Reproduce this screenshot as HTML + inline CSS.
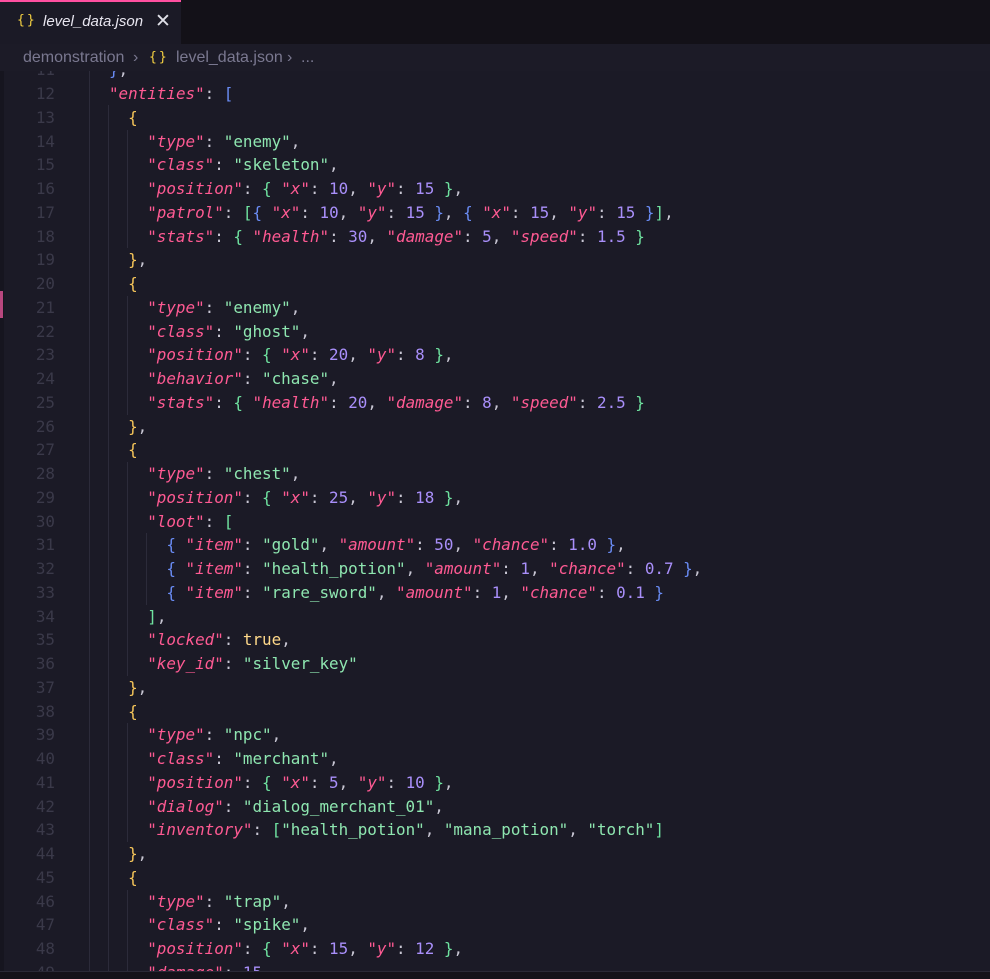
<!DOCTYPE html>
<html><head><meta charset="utf-8"><style>
*{margin:0;padding:0;box-sizing:border-box}
body{width:990px;height:979px;overflow:hidden;background:#1b1a26;position:relative;font-family:"DejaVu Sans Mono","Liberation Mono",monospace}
#tabs{position:absolute;left:0;top:0;width:990px;height:44px;background:#131118}
#tab{position:absolute;left:0;top:0;width:181px;height:44px;background:#1b1a26;border-top:2px solid #ff4fa0;font-family:"Liberation Sans",sans-serif;font-size:15px;color:#e8e6f0;font-style:italic}
#tab .br{position:absolute;left:17px;top:11px;color:#f5d142;font-style:normal;font-family:"DejaVu Sans Mono",monospace;font-size:13px;letter-spacing:2px}
#tab .nm{position:absolute;left:43px;top:11px}
#tab .x{position:absolute;left:155px;top:8px;font-style:normal;font-size:19px;color:#e0e0e8}
#crumb{position:absolute;left:0;top:44px;width:990px;height:27px;background:#1c1b27;font-family:"Liberation Sans",sans-serif;font-size:16px;color:#7a7890;white-space:nowrap}
#crumb span{position:absolute;top:5px}
#ed{position:absolute;left:0;top:71px;width:990px;height:900px;overflow:hidden}
.strip{position:absolute;left:0;top:0;width:4px;height:900px;background:#16151f}
.mark{position:absolute;left:0;top:220px;width:3px;height:27px;background:#b8477e}
.g{position:absolute;width:1px;background:#2c2b3a}
.ln{position:absolute;left:0;width:55px;text-align:right;color:#3a3949;font-size:15.9px;line-height:23.75px;height:23.75px}
.l{position:absolute;left:70.7px;white-space:pre;font-size:15.9px;line-height:23.75px;height:23.75px;color:#c9c7d4}
.k{color:#ff5a93;font-style:italic}
.s{color:#8ee6b0}
.n{color:#a98ffa}
.t{color:#ffd98a}
.b1{color:#6a8cf5}
.b2{color:#f7c65a}
.b3{color:#6fe3a0}
#bot{position:absolute;left:0;top:971px;width:990px;height:8px;background:#141219;border-top:1px solid #2a2936}
</style></head><body>
<div id="tabs"><div id="tab"><span class="br">{}</span><span class="nm">level_data.json</span><span class="x">✕</span></div></div>
<div id="crumb"><span style="left:23px">demonstration</span><span style="left:133px">›</span><span style="left:149px;color:#f5d142;font-family:'DejaVu Sans Mono',monospace;font-size:13px;letter-spacing:2px;top:6px">{}</span><span style="left:176px">level_data.json</span><span style="left:287px">›</span><span style="left:301px">...</span></div>
<div id="ed">
<div class="strip"></div><div class="mark"></div>
<div class="g" style="left:89px;top:0;height:900px"></div>
<div class="g" style="left:108px;top:34px;height:866px"></div>
<div id="code"></div>
</div>
<div id="bot"></div>
<script>
const L=[
[11,'    <span class="b1">}</span>,'],
[12,'    <span class="k">"entities"</span>: <span class="b1">[</span>'],
[13,'      <span class="b2">{</span>'],
[14,'        <span class="k">"type"</span>: <span class="s">"enemy"</span>,'],
[15,'        <span class="k">"class"</span>: <span class="s">"skeleton"</span>,'],
[16,'        <span class="k">"position"</span>: <span class="b3">{</span> <span class="k">"x"</span>: <span class="n">10</span>, <span class="k">"y"</span>: <span class="n">15</span> <span class="b3">}</span>,'],
[17,'        <span class="k">"patrol"</span>: <span class="b3">[</span><span class="b1">{</span> <span class="k">"x"</span>: <span class="n">10</span>, <span class="k">"y"</span>: <span class="n">15</span> <span class="b1">}</span>, <span class="b1">{</span> <span class="k">"x"</span>: <span class="n">15</span>, <span class="k">"y"</span>: <span class="n">15</span> <span class="b1">}</span><span class="b3">]</span>,'],
[18,'        <span class="k">"stats"</span>: <span class="b3">{</span> <span class="k">"health"</span>: <span class="n">30</span>, <span class="k">"damage"</span>: <span class="n">5</span>, <span class="k">"speed"</span>: <span class="n">1.5</span> <span class="b3">}</span>'],
[19,'      <span class="b2">}</span>,'],
[20,'      <span class="b2">{</span>'],
[21,'        <span class="k">"type"</span>: <span class="s">"enemy"</span>,'],
[22,'        <span class="k">"class"</span>: <span class="s">"ghost"</span>,'],
[23,'        <span class="k">"position"</span>: <span class="b3">{</span> <span class="k">"x"</span>: <span class="n">20</span>, <span class="k">"y"</span>: <span class="n">8</span> <span class="b3">}</span>,'],
[24,'        <span class="k">"behavior"</span>: <span class="s">"chase"</span>,'],
[25,'        <span class="k">"stats"</span>: <span class="b3">{</span> <span class="k">"health"</span>: <span class="n">20</span>, <span class="k">"damage"</span>: <span class="n">8</span>, <span class="k">"speed"</span>: <span class="n">2.5</span> <span class="b3">}</span>'],
[26,'      <span class="b2">}</span>,'],
[27,'      <span class="b2">{</span>'],
[28,'        <span class="k">"type"</span>: <span class="s">"chest"</span>,'],
[29,'        <span class="k">"position"</span>: <span class="b3">{</span> <span class="k">"x"</span>: <span class="n">25</span>, <span class="k">"y"</span>: <span class="n">18</span> <span class="b3">}</span>,'],
[30,'        <span class="k">"loot"</span>: <span class="b3">[</span>'],
[31,'          <span class="b1">{</span> <span class="k">"item"</span>: <span class="s">"gold"</span>, <span class="k">"amount"</span>: <span class="n">50</span>, <span class="k">"chance"</span>: <span class="n">1.0</span> <span class="b1">}</span>,'],
[32,'          <span class="b1">{</span> <span class="k">"item"</span>: <span class="s">"health_potion"</span>, <span class="k">"amount"</span>: <span class="n">1</span>, <span class="k">"chance"</span>: <span class="n">0.7</span> <span class="b1">}</span>,'],
[33,'          <span class="b1">{</span> <span class="k">"item"</span>: <span class="s">"rare_sword"</span>, <span class="k">"amount"</span>: <span class="n">1</span>, <span class="k">"chance"</span>: <span class="n">0.1</span> <span class="b1">}</span>'],
[34,'        <span class="b3">]</span>,'],
[35,'        <span class="k">"locked"</span>: <span class="t">true</span>,'],
[36,'        <span class="k">"key_id"</span>: <span class="s">"silver_key"</span>'],
[37,'      <span class="b2">}</span>,'],
[38,'      <span class="b2">{</span>'],
[39,'        <span class="k">"type"</span>: <span class="s">"npc"</span>,'],
[40,'        <span class="k">"class"</span>: <span class="s">"merchant"</span>,'],
[41,'        <span class="k">"position"</span>: <span class="b3">{</span> <span class="k">"x"</span>: <span class="n">5</span>, <span class="k">"y"</span>: <span class="n">10</span> <span class="b3">}</span>,'],
[42,'        <span class="k">"dialog"</span>: <span class="s">"dialog_merchant_01"</span>,'],
[43,'        <span class="k">"inventory"</span>: <span class="b3">[</span><span class="s">"health_potion"</span>, <span class="s">"mana_potion"</span>, <span class="s">"torch"</span><span class="b3">]</span>'],
[44,'      <span class="b2">}</span>,'],
[45,'      <span class="b2">{</span>'],
[46,'        <span class="k">"type"</span>: <span class="s">"trap"</span>,'],
[47,'        <span class="k">"class"</span>: <span class="s">"spike"</span>,'],
[48,'        <span class="k">"position"</span>: <span class="b3">{</span> <span class="k">"x"</span>: <span class="n">15</span>, <span class="k">"y"</span>: <span class="n">12</span> <span class="b3">}</span>,'],
[49,'        <span class="k">"damage"</span>: <span class="n">15</span>,']
];
let h='';const lh=23.75,y0=94-71-lh/2-lh;
L.forEach((r,i)=>{const y=y0+i*lh;h+=`<div class="ln" style="top:${y}px">${r[0]}</div><div class="l" style="top:${y}px">${r[1]}</div>`;});
[[14,18],[21,25],[28,36],[39,43],[46,49]].forEach(([a,b])=>{h+=`<div class="g" style="left:127px;top:${y0+(a-11)*lh}px;height:${(b-a+1)*lh}px"></div>`});
h+=`<div class="g" style="left:146px;top:${y0+20*lh}px;height:${3*lh}px"></div>`;
document.getElementById('code').innerHTML=h;
</script>
</body></html>
